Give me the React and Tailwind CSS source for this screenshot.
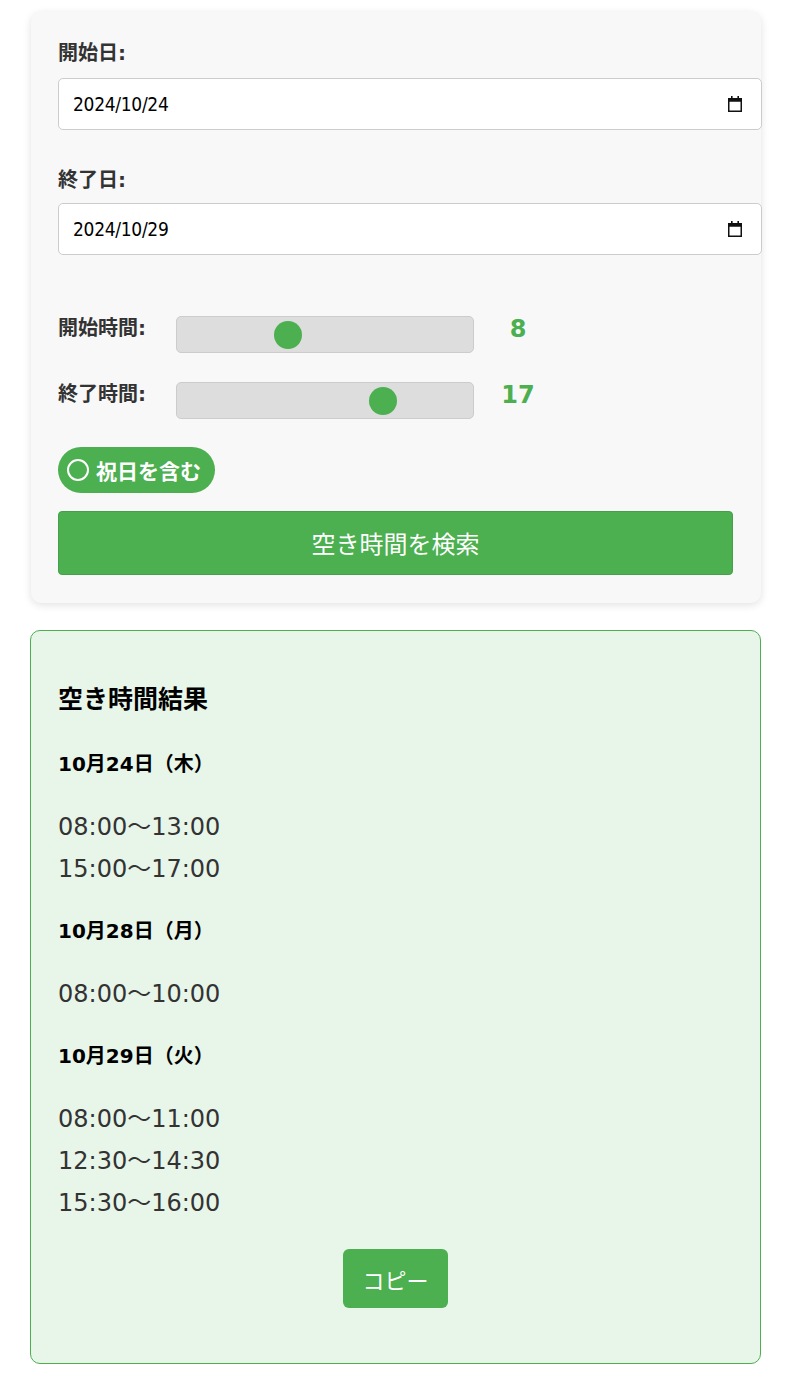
import React from "react";

const LATIN = '"DejaVu Sans", "Noto Sans CJK JP", sans-serif';

function CalendarIcon() {
  return (
    <svg width="14" height="16" viewBox="0 0 14 16" className="shrink-0">
      <rect x="3" y="0" width="1.6" height="3" fill="#111" />
      <rect x="9.4" y="0" width="1.6" height="3" fill="#111" />
      <rect x="0.75" y="2.75" width="12.5" height="12.5" fill="none" stroke="#111" strokeWidth="1.5" />
      <rect x="0.75" y="2.75" width="12.5" height="3" fill="#111" />
    </svg>
  );
}

function DateField({ value }) {
  return (
    <div className="w-[704px] h-[52px] bg-white border border-[#cccccc] rounded-[5px] flex items-center justify-between pl-[14px] pr-[19px]">
      <span
        className="text-[19px] text-black tracking-[-0.3px]"
        style={{ fontFamily: '"DejaVu Sans Condensed", "Liberation Sans", sans-serif' }}
      >
        {value}
      </span>
      <CalendarIcon />
    </div>
  );
}

function SliderRow({ label, value, pct }) {
  return (
    <div className="flex items-start h-[37px]">
      <div
        className="w-[118px] text-[20px] font-bold text-[#333333] leading-[27px] -mt-[1px]"
        style={{ fontFamily: LATIN }}
      >
        {label}
      </div>
      <div className="relative w-[298px] h-[37px] bg-[#dddddd] border border-[#cccccc] rounded-[5px]">
        <div
          className="absolute top-1/2 w-[28px] h-[28px] -mt-[14px] rounded-full bg-[#4caf50]"
          style={{ left: `${pct}px` }}
        />
      </div>
      <div
        className="w-[86px] text-center text-[24px] font-bold text-[#4caf50] leading-[30px] pl-[2px] -mt-[2px]"
        style={{ fontFamily: LATIN }}
      >
        {value}
      </div>
    </div>
  );
}

const results = [
  { date: "10月24日（木）", times: ["08:00〜13:00", "15:00〜17:00"] },
  { date: "10月28日（月）", times: ["08:00〜10:00"] },
  { date: "10月29日（火）", times: ["08:00〜11:00", "12:30〜14:30", "15:30〜16:00"] },
];

export default function App() {
  return (
    <div
      className="bg-white min-h-[1380px] pt-[12px] pl-[30px]"
      style={{ fontFamily: '"Noto Sans CJK JP", "Noto Sans", sans-serif' }}
    >
      <div className="w-[730px] ml-[1px] bg-[#f8f8f8] rounded-[10px] shadow-[0_2px_8px_rgba(0,0,0,0.12)] pt-[28px] pb-[28px] pl-[27px]">
        <div className="text-[20px] font-bold text-[#333333] leading-[27px] mb-[11px]" style={{ fontFamily: LATIN }}>
          開始日:
        </div>
        <DateField value="2024/10/24" />
        <div
          className="text-[20px] font-bold text-[#333333] leading-[27px] mt-[37px] mb-[9px]"
          style={{ fontFamily: LATIN }}
        >
          終了日:
        </div>
        <DateField value="2024/10/29" />

        <div className="mt-[61px] flex flex-col gap-[29px]">
          <SliderRow label="開始時間:" value="8" pct={97} />
          <SliderRow label="終了時間:" value="17" pct={192} />
        </div>

        <div className="mt-[28px] inline-flex items-center h-[46px] rounded-full bg-[#4caf50] pl-[9px] pr-[14px] gap-[7px]">
          <div className="w-[22px] h-[22px] rounded-full border-2 border-white" />
          <span className="text-[21px] font-bold text-white leading-[27px]">祝日を含む</span>
        </div>

        <div className="mt-[18px] w-[675px] h-[64px] rounded-[4px] bg-[#4caf50] border border-[#46a04a] flex items-center justify-center">
          <span className="text-[24px] text-white leading-[30px]">空き時間を検索</span>
        </div>
      </div>

      <div className="mt-[27px] w-[731px] bg-[#e8f5e9] border border-[#4caf50] rounded-[10px] pt-[50px] pb-[55px] pl-[27px] pr-[27px]">
        <div className="text-[25px] font-bold text-black leading-[33px]">空き時間結果</div>
        {results.map((r, i) => (
          <div key={r.date} className={i === 0 ? "mt-[37px]" : "mt-[28px]"}>
            <div className="text-[20px] font-bold text-black leading-[27px]" style={{ fontFamily: LATIN }}>
              {r.date}
            </div>
            <div className="mt-[28px]">
              {r.times.map((t) => (
                <div key={t} className="text-[24px] text-[#333333] leading-[42px]" style={{ fontFamily: LATIN }}>
                  {t}
                </div>
              ))}
            </div>
          </div>
        ))}
        <div className="mt-[25px] flex justify-center">
          <div className="w-[105px] h-[59px] rounded-[6px] bg-[#4caf50] flex items-center justify-center">
            <span className="text-[22px] text-white leading-[28px]">コピー</span>
          </div>
        </div>
      </div>
    </div>
  );
}
